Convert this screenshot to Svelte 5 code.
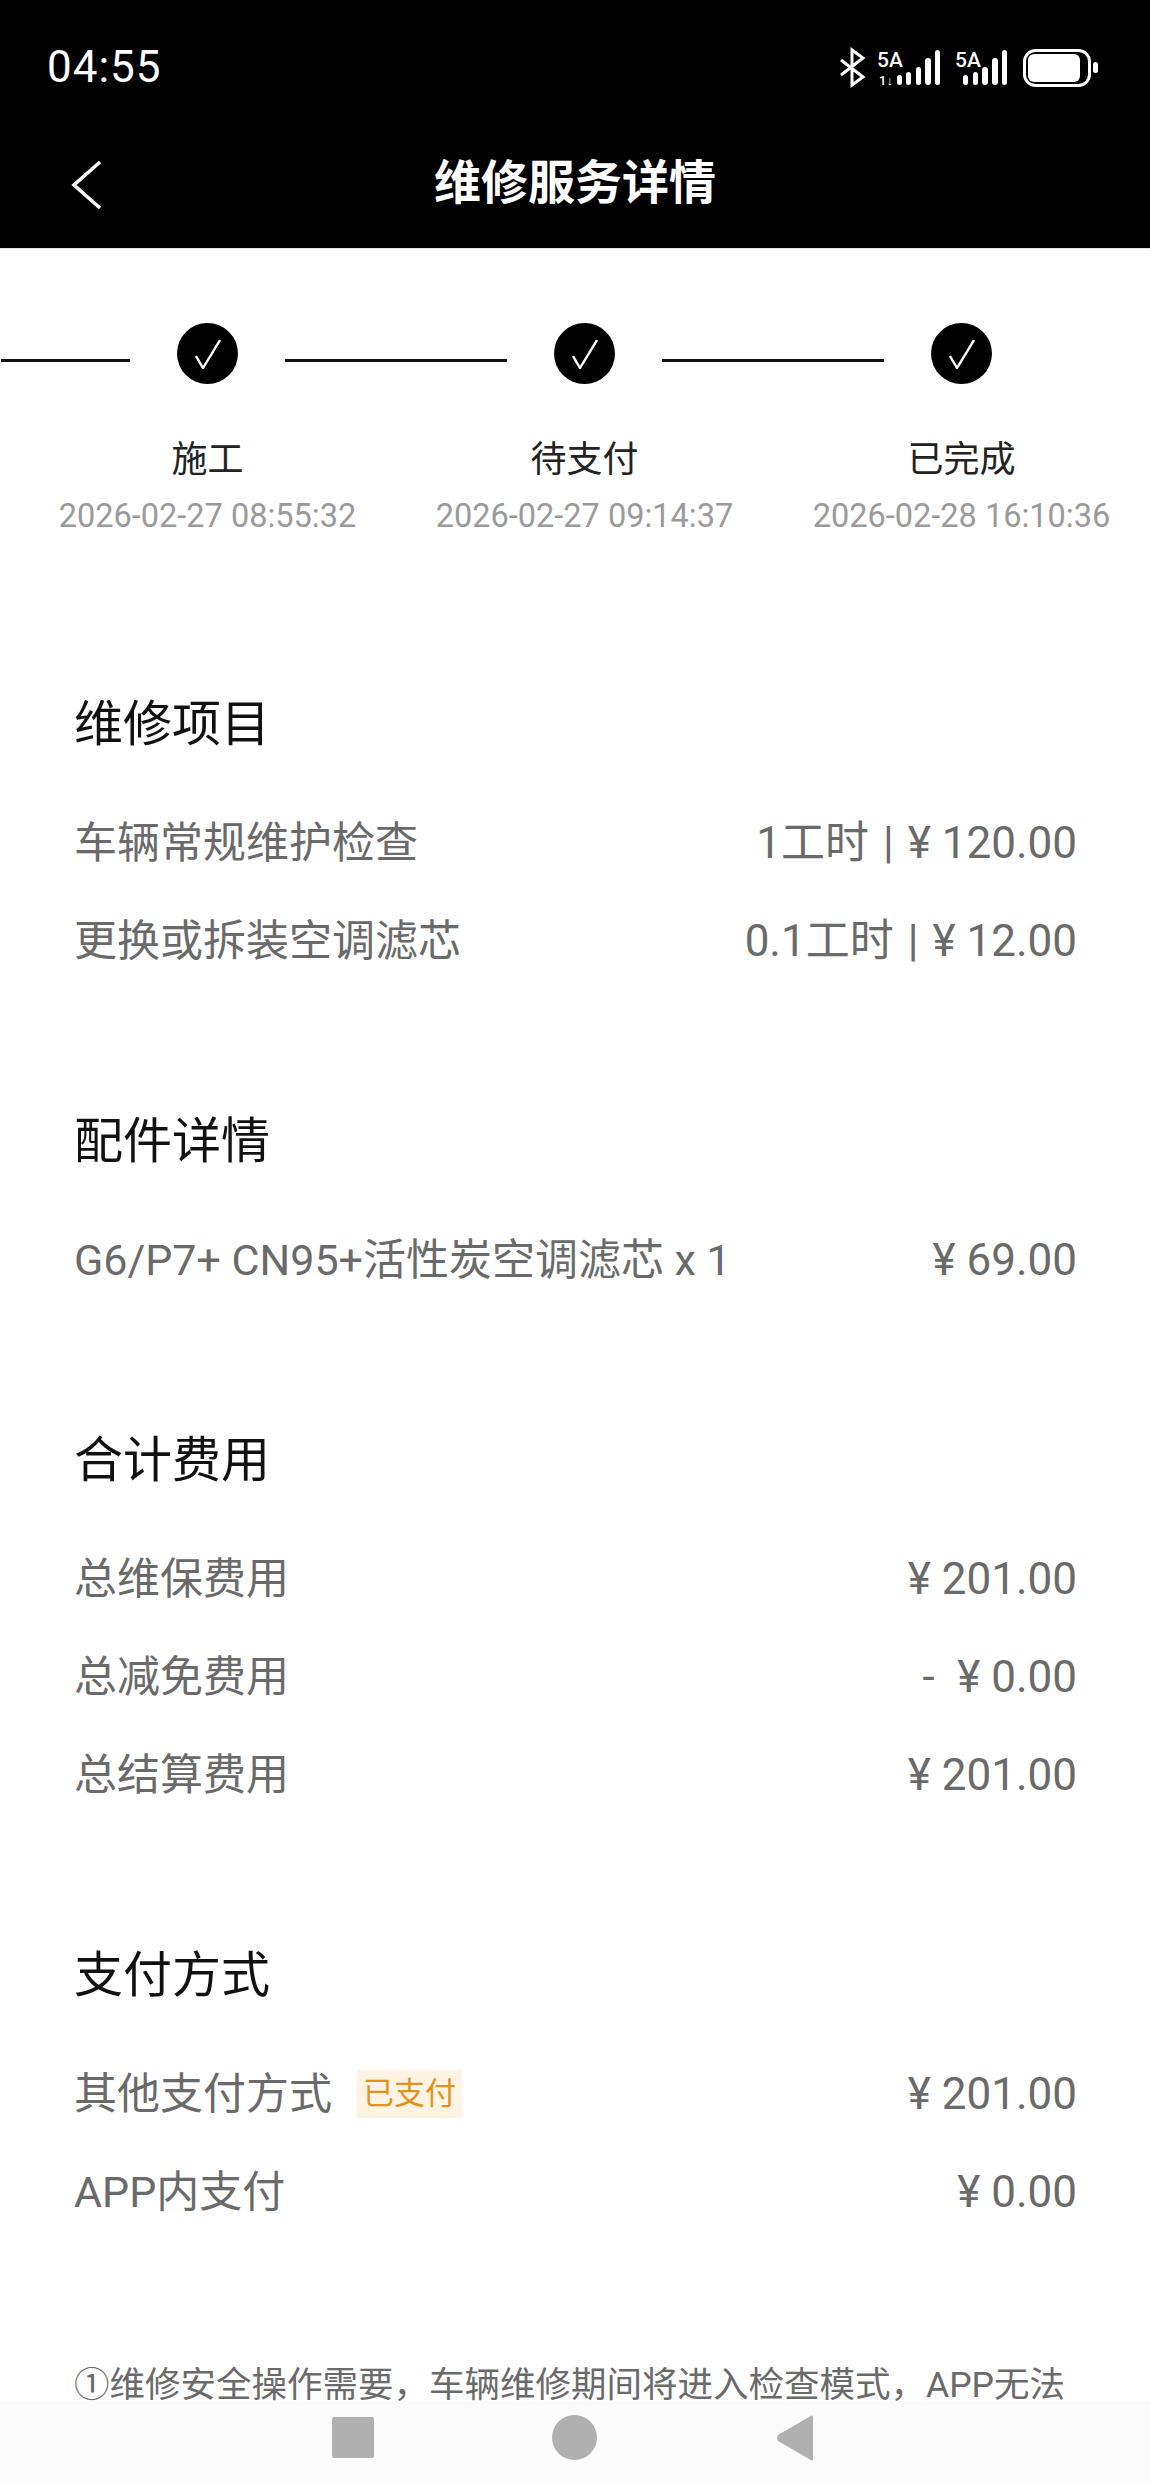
<script>
  const steps = [
    { name: '施工', time: '2026-02-27 08:55:32' },
    { name: '待支付', time: '2026-02-27 09:14:37' },
    { name: '已完成', time: '2026-02-28 16:10:36' }
  ];
  const sections = [
    { title: '维修项目', rows: [
      { label: '车辆常规维护检查', hours: '1工时', val: '¥ 120.00' },
      { label: '更换或拆装空调滤芯', hours: '0.1工时', val: '¥ 12.00' }
    ] },
    { title: '配件详情', rows: [{ label: 'G6/P7+ CN95+活性炭空调滤芯 x 1', val: '¥ 69.00' }] },
    { title: '合计费用', rows: [
      { label: '总维保费用', val: '¥ 201.00' },
      { label: '总减免费用', val: '-\u2002¥ 0.00' },
      { label: '总结算费用', val: '¥ 201.00' }
    ] },
    { title: '支付方式', rows: [
      { label: '其他支付方式', tag: '已支付', val: '¥ 201.00' },
      { label: 'APP内支付', val: '¥ 0.00' }
    ] }
  ];
</script>

<div class="page">
  <header class="top">
    <div class="status">
      <span class="clock">04:55</span>
      <svg class="sysicons" width="262" height="48" viewBox="0 0 262 48" fill="none">
        <path d="M3 18 L25 35 L14 43 V8 L25 16 L3 33" stroke="#fff" stroke-width="3"/>
        <text x="39" y="25" class="net">5A</text>
        <text x="41" y="43" class="small">1↓</text>
        <g fill="#fff">
          <rect x="59" y="33" width="5" height="10" rx="2.5"/><rect x="68" y="30" width="5" height="13" rx="2.5"/>
          <rect x="78" y="25" width="5" height="18" rx="2.5"/><rect x="87" y="16" width="6" height="27" rx="3"/>
          <rect x="97" y="8" width="5" height="35" rx="2.5"/>
          <rect x="125" y="33" width="5" height="10" rx="2.5"/><rect x="135" y="30" width="5" height="13" rx="2.5"/>
          <rect x="144" y="25" width="6" height="18" rx="3"/><rect x="154" y="16" width="6" height="27" rx="3"/>
          <rect x="164" y="8" width="5" height="35" rx="2.5"/>
        </g>
        <text x="117" y="25" class="net">5A</text>
        <rect x="186.5" y="8.5" width="65" height="35" rx="11" stroke="#fff" stroke-width="3"/>
        <rect x="190" y="12" width="52" height="28" rx="6" fill="#fff"/>
        <rect x="255" y="20" width="5" height="11" rx="2.5" fill="#fff"/>
      </svg>
    </div>
    <div class="nav">
      <svg class="back" width="32" height="50" viewBox="0 0 32 50" fill="none">
        <path d="M30 2 L4 25 L30 48" stroke="#fff" stroke-width="3.6"/>
      </svg>
      <h1>维修服务详情</h1>
    </div>
  </header>

  <section class="steps">
    {#each steps as s}
      <div class="step">
        <div class="track">
          <span class="line"></span>
          <span class="dot"><svg width="26" height="30" viewBox="0 0 26 30" fill="none"><path d="M1 17 L8 29 L25 1" stroke="#fff" stroke-width="2.4"/></svg></span>
        </div>
        <div class="name">{s.name}</div>
        <div class="time">{s.time}</div>
      </div>
    {/each}
  </section>

  <main class="content">
    {#each sections as sec}
      <section class="sec">
        <h2>{sec.title}</h2>
        {#each sec.rows as r}
          <div class="row">
            <span class="label">{r.label}{#if r.tag}<em class="tag">{r.tag}</em>{/if}</span>
            <span class="val">{#if r.hours}{r.hours}<i class="sep">|</i>{/if}{r.val}</span>
          </div>
        {/each}
      </section>
    {/each}
    <p class="note">①维修安全操作需要，车辆维修期间将进入检查模式，APP无法</p>
  </main>

  <nav class="softkeys">
    <svg class="k1" width="42" height="41" viewBox="0 0 42 41"><rect width="42" height="41" rx="2" fill="#b0b0b0"/></svg>
    <svg class="k2" width="45" height="45" viewBox="0 0 45 45"><circle cx="22.5" cy="22.5" r="22.5" fill="#b0b0b0"/></svg>
    <svg class="k3" width="37" height="46" viewBox="0 0 37 46"><path d="M37 2 V44 Q36 47 33 44 L2 26 Q0 23 2 20 L33 2 Q36 -1 37 2 Z" fill="#b0b0b0"/></svg>
  </nav>
</div>

<style>
  :global(body) { margin: 0; background: #fff; }
  .page {
    position: relative;
    width: 1150px;
    height: 2483px;
    overflow: hidden;
    font-family: "Roboto", "Noto Sans CJK SC", sans-serif;
    background: #fff;
  }
  .top { background: #000; color: #fff; height: 249px; border-bottom: 1px solid #e6e6e6; box-sizing: border-box; }
  .status { display: flex; justify-content: space-between; align-items: flex-start; padding: 42px 50px 0 47px; height: 48px; }
  .clock { margin-top: 1px; font-size: 44px; line-height: 48px; letter-spacing: 1px; }
  .sysicons { display: block; }
  .net { font: 500 21px "Roboto", sans-serif; fill: #fff; }
  .small { font: 500 13px "Roboto", sans-serif; fill: #fff; }
  .nav { position: relative; display: flex; justify-content: center; align-items: center; height: 60px; margin-top: 63px; }
  .back { position: absolute; left: 70px; top: 7px; }
  h1 { margin: 0; font-size: 47px; font-weight: 700; line-height: 60px; }

  .steps { display: grid; grid-template-columns: repeat(3, 377px); padding: 74px 0 0 19px; }
  .step { display: flex; flex-direction: column; align-items: center; }
  .track { position: relative; width: 377px; height: 61px; display: flex; justify-content: center; }
  .line { position: absolute; right: 266px; top: 36px; width: 222px; height: 3px; background: #111; }
  .step:first-child .line { width: 129px; }
  .dot { width: 61px; height: 61px; border-radius: 50%; background: #000; display: flex; align-items: center; justify-content: center; }
  .name { margin-top: 54px; font-size: 36px; line-height: 44px; color: #222; }
  .time { margin-top: 16px; font-size: 32.5px; line-height: 36px; color: #9a9a9a; white-space: nowrap; }

  .content { padding: 159px 73px 0 74px; }
  .sec { margin-bottom: 120px; }
  h2 { margin: 0 0 37px; font-size: 49px; font-weight: 400; line-height: 64px; color: #111; }
  .row { display: flex; justify-content: space-between; align-items: baseline; height: 98px; line-height: 98px; font-size: 43px; color: #6a6a6a; }
  .val { font-size: 44px; }
  .sep { margin: 0 14px; font-style: normal; }
  .label { display: flex; align-items: center; }
  .tag { margin-left: 25px; padding: 0 6px; height: 48px; line-height: 48px; background: #fff3e4; color: #e0921f; font-size: 31px; font-style: normal; }
  .note { margin: 0; font-size: 35.5px; line-height: 48px; color: #6a6a6a; white-space: nowrap; }

  .softkeys {
    position: absolute; left: 0; right: 0; bottom: 0; height: 82px;
    background: #fbfbfb;
  }
  .softkeys svg { position: absolute; top: 14px; }
  .softkeys .k1 { left: 332px; top: 16px; }
  .softkeys .k2 { left: 552px; }
  .softkeys .k3 { left: 776px; }
</style>
